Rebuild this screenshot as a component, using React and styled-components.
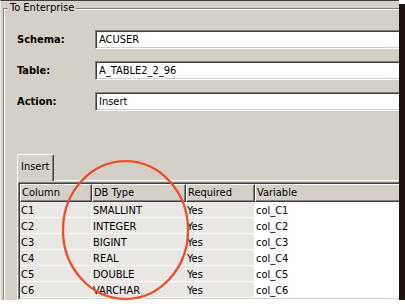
import React from 'react'
import styled, { createGlobalStyle } from 'styled-components'

const GlobalStyle = createGlobalStyle`
  html, body {
    margin: 0;
    padding: 0;
    background: #fff;
  }
  body {
    font-family: "DejaVu Sans Condensed", "Liberation Sans", sans-serif;
    font-size: 11px;
    color: #000;
  }
`

const fields = [
  { label: 'Schema:', value: 'ACUSER' },
  { label: 'Table:', value: 'A_TABLE2_2_96' },
  { label: 'Action:', value: 'Insert' },
]

const rows = [
  ['C1', 'SMALLINT', 'Yes', 'col_C1'],
  ['C2', 'INTEGER', 'Yes', 'col_C2'],
  ['C3', 'BIGINT', 'Yes', 'col_C3'],
  ['C4', 'REAL', 'Yes', 'col_C4'],
  ['C5', 'DOUBLE', 'Yes', 'col_C5'],
  ['C6', 'VARCHAR', 'Yes', 'col_C6'],
]

const columns = ['Column', 'DB Type', 'Required', 'Variable']

const App = () => (
  <>
    <GlobalStyle />
    <Screen>
      <GroupBox>
        <GroupTitle>To Enterprise</GroupTitle>
        <Form>
          {fields.map(f => (
            <FormRow key={f.label}>
              <Label>{f.label}</Label>
              <TextField>{f.value}</TextField>
            </FormRow>
          ))}
        </Form>

        <TabArea>
          <TabStrip>
            <Tab>Insert</Tab>
          </TabStrip>
          <TabPanel>
            <SunkenOuter>
              <SunkenInner>
                <Grid>
                  {columns.map(c => (
                    <HeaderCell key={c}>{c}</HeaderCell>
                  ))}
                  {rows.map(r =>
                    r.map((v, i) => (
                      <Cell key={r[0] + i} $white={i === 3}>{v}</Cell>
                    ))
                  )}
                </Grid>
              </SunkenInner>
            </SunkenOuter>
          </TabPanel>
        </TabArea>
      </GroupBox>

      <Circle viewBox="0 0 127 141" width="127" height="141">
        <ellipse cx="63.5" cy="70" rx="62.5" ry="68.8" fill="none" stroke="#ef4d2a" strokeWidth="2.3" />
      </Circle>
    </Screen>
  </>
)

export default App

const Screen = styled.div`
  position: relative;
  width: 399px;
  height: 300px;
  box-sizing: border-box;
  background: #d4d0c8;
  border-top: 1px solid #404040;
  border-left: 1px solid #ece9e4;
  box-shadow: 5px 5px 0 1px #1d130c;
  overflow: hidden;
  padding: 7px 0 0 2px;
`

const GroupBox = styled.div`
  position: relative;
  margin-right: -40px;
  border-top: 1px solid #808080;
  border-left: 1px solid #808080;
  box-shadow: inset 1px 1px 0 #fff;
  padding: 21px 0 0 13px;
`

const GroupTitle = styled.div`
  position: absolute;
  top: -8px;
  left: 4px;
  padding: 0 2px;
  line-height: 14px;
  background: #d4d0c8;
`

const Form = styled.div`
  display: flex;
  flex-direction: column;
  gap: 12px;
`

const FormRow = styled.div`
  display: grid;
  grid-template-columns: 78px 1fr;
  align-items: center;
  height: 19px;
`

const Label = styled.div`
  font-weight: bold;
`

const TextField = styled.div`
  height: 19px;
  box-sizing: border-box;
  background: #fff;
  border-top: 1px solid #808080;
  border-left: 1px solid #808080;
  border-bottom: 1px solid #fff;
  border-right: 1px solid #fff;
  box-shadow: inset 1px 1px 0 #404040, inset -1px -1px 0 #d4d0c8;
  padding-left: 3px;
  line-height: 17px;
`

const TabArea = styled.div`
  margin-top: 43px;
`

const TabStrip = styled.div`
  display: flex;
`

const Tab = styled.div`
  position: relative;
  z-index: 1;
  width: 37px;
  height: 27px;
  box-sizing: border-box;
  margin-bottom: -1px;
  background: #d4d0c8;
  border-top: 1px solid #fff;
  border-left: 1px solid #fff;
  border-right: 1px solid #404040;
  border-radius: 2px 2px 0 0;
  box-shadow: inset -1px 0 0 #808080;
  padding: 5px 0 0 3px;
  line-height: 14px;
`

const TabPanel = styled.div`
  border-top: 1px solid #fff;
  border-left: 1px solid #fff;
  padding-top: 1px;
`

const SunkenOuter = styled.div`
  border-top: 1px solid #808080;
  border-left: 1px solid #808080;
  border-bottom: 1px solid #fff;
`

const SunkenInner = styled.div`
  border-top: 1px solid #404040;
  border-left: 1px solid #404040;
  border-bottom: 1px solid #d4d0c8;
`

const Grid = styled.div`
  display: grid;
  grid-template-columns: 72px 94px 69px 1fr;
`

const HeaderCell = styled.div`
  height: 18px;
  box-sizing: border-box;
  background: #d4d0c8;
  border-top: 1px solid #fff;
  border-left: 1px solid #fff;
  border-right: 1px solid #404040;
  border-bottom: 1px solid #404040;
  box-shadow: inset -1px -1px 0 #808080;
  padding-left: 1px;
  line-height: 16px;
  white-space: nowrap;
`

const Cell = styled.div`
  height: 16px;
  box-sizing: border-box;
  background: ${p => (p.$white ? '#fff' : '#e9e7e3')};
  border-right: 1px solid #fff;
  border-bottom: 1px solid #fff;
  padding: 2px 0 0 1px;
  line-height: 13px;
  white-space: nowrap;
`

const Circle = styled.svg`
  position: absolute;
  left: 61px;
  top: 159px;
  pointer-events: none;
`
